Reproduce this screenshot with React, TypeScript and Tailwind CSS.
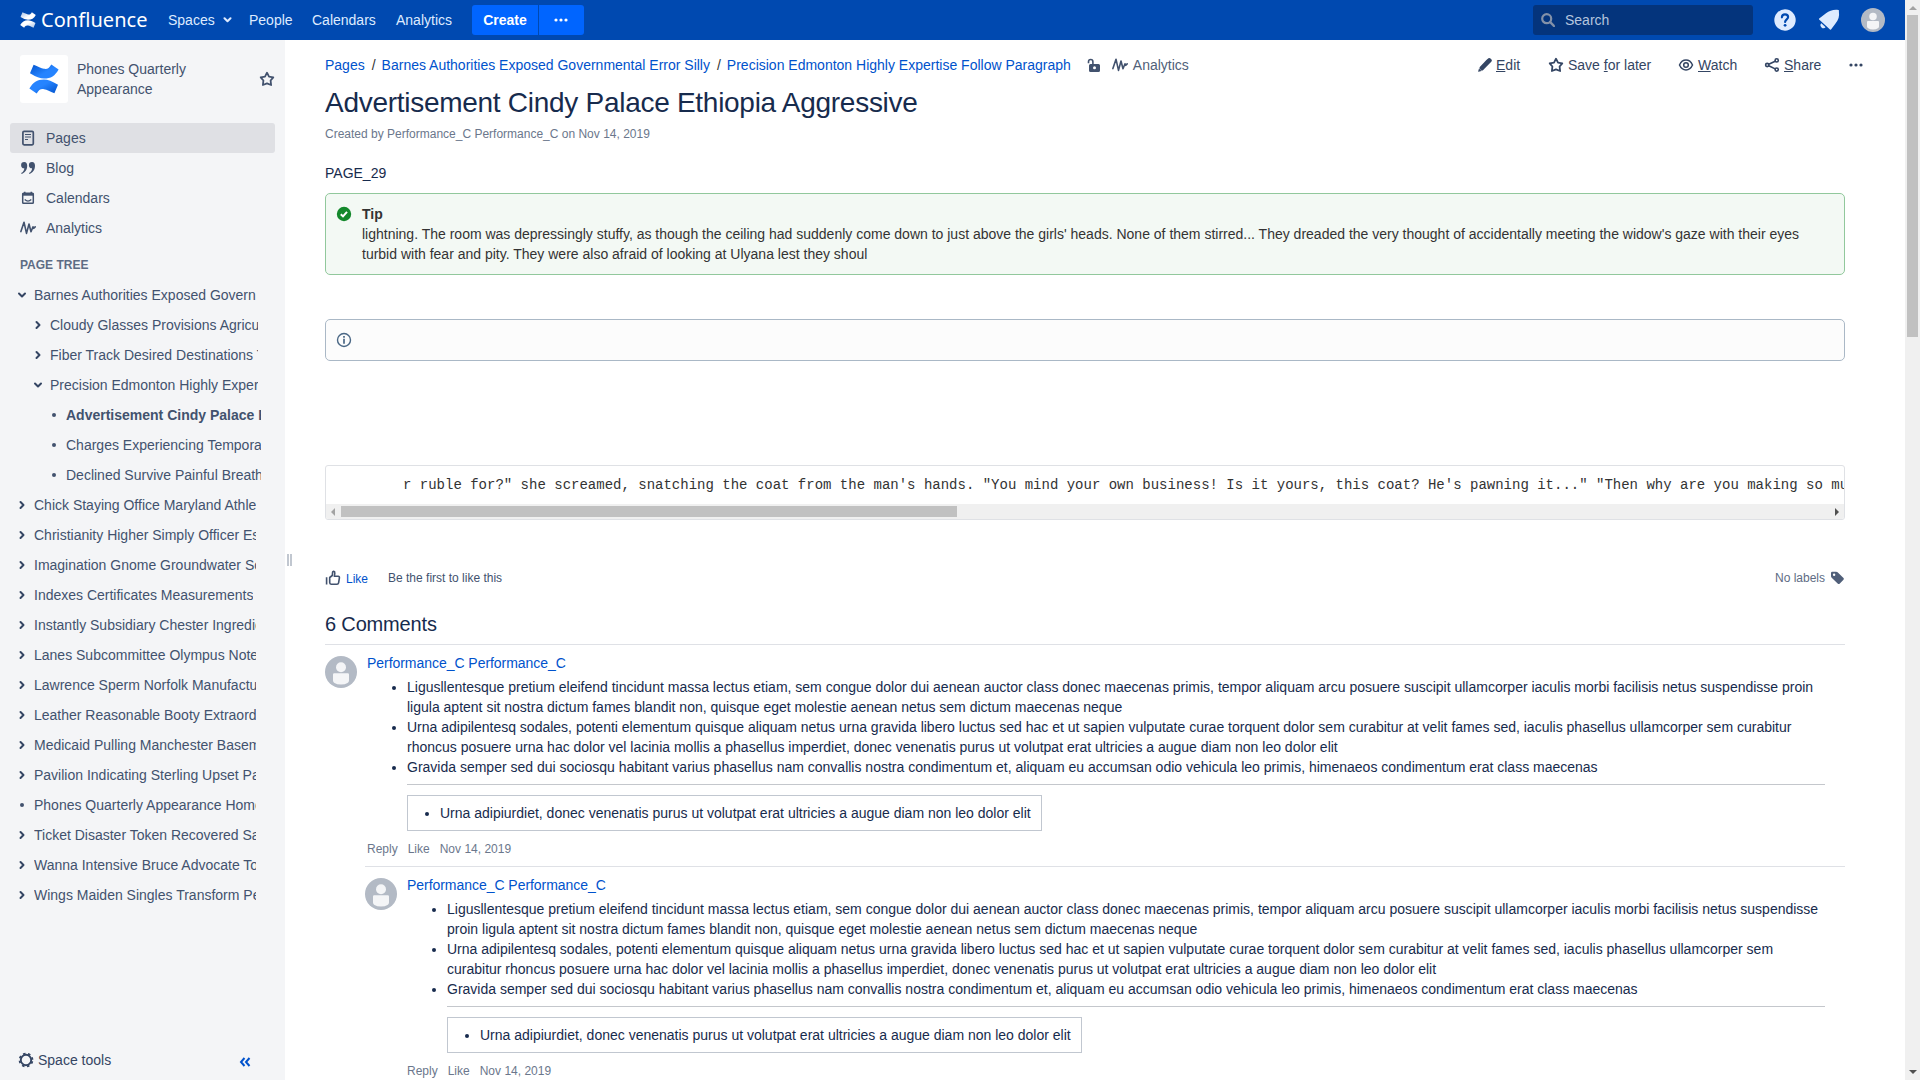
import React from "react";

type IconProps = { className?: string };

const Star = ({ className = "" }: IconProps) => (
  <svg className={className} width="16" height="16" viewBox="0 0 16 16" fill="none" stroke="currentColor" strokeWidth="1.8" strokeLinejoin="round">
    <path d="M8 1.7 L10 5.7 L14.3 6.3 L11.6 9.5 L12.1 14 L8 12.4 L3.9 14 L4.4 9.5 L1.7 6.3 L6 5.7 Z" />
  </svg>
);

const Wave = ({ className = "" }: IconProps) => (
  <svg className={className} width="16" height="16" viewBox="0 0 16 16" fill="none" stroke="currentColor" strokeWidth="1.6" strokeLinecap="round" strokeLinejoin="round">
    <path d="M.9 11.600 L4 2.200 L6.500 13.400 L9 4 L11 11.800 L13 6.800 L13.600 8.300 L15.200 6.800" />
  </svg>
);

const PageIcon = () => (
  <svg width="16" height="16" viewBox="0 0 16 16" fill="none" stroke="currentColor">
    <rect x="2.900" y="1.400" width="10.400" height="13.400" rx="1.200" strokeWidth="1.700" />
    <path d="M5 4.500h6M5 7h6M5 9.500h3" strokeWidth="1.200" />
  </svg>
);

const QuoteIcon = () => (
  <svg width="16" height="16" viewBox="0 0 16 16" fill="currentColor">
    <path d="M4.200 2C6.300 2 7.200 3.600 7.200 5.800 7.200 10 4.800 13 1.600 14L1.200 13.100C3.200 12 4.200 10.600 4.300 8.300A3.150 3.150 0 1 1 4.200 2Z" />
    <path d="M12 2C14.100 2 15 3.600 15 5.800 15 10 12.600 13 9.400 14L9 13.100C11 12 12 10.600 12.100 8.300A3.150 3.150 0 1 1 12 2Z" />
  </svg>
);

const CalendarIcon = () => (
  <svg width="16" height="16" viewBox="0 0 16 16" fill="none" stroke="currentColor" strokeWidth="1.500">
    <rect x="2.700" y="3.200" width="10.600" height="10.100" rx="0.800" />
    <path d="M2.500 4.400h11" strokeWidth="2.600" />
    <path d="M4.700 1.800v2M11.300 1.800v2" strokeWidth="1.600" />
    <path d="M4.700 9.500Q8 12.600 11.300 9.500" strokeWidth="1.200" />
  </svg>
);

const Chevron = ({ open }: { open?: boolean }) => (
  <svg className="text-[#344563]" width="10" height="10" viewBox="0 0 10 10" fill="none" stroke="currentColor" strokeWidth="2" strokeLinecap="round" strokeLinejoin="round">
    {open ? <path d="M2 3.500 L5 6.500 L8 3.500" /> : <path d="M3.500 2 L6.500 5 L3.500 8" />}
  </svg>
);

const Dots = ({ className = "" }: IconProps) => (
  <svg className={className} width="14" height="4" viewBox="0 0 14 4" fill="currentColor">
    <circle cx="2" cy="2" r="1.600" />
    <circle cx="7" cy="2" r="1.600" />
    <circle cx="12" cy="2" r="1.600" />
  </svg>
);

const Avatar = ({ size }: { size: number }) => (
  <svg className="block shrink-0" width={size} height={size} viewBox="0 0 32 32">
    <circle cx="16" cy="16" r="16" fill="#b3bac5" />
    <circle cx="16" cy="11.300" r="5" fill="#f4f5f7" />
    <path d="M8 18.500a1.200 1.200 0 0 1 1.200-1.200h13.600a1.200 1.200 0 0 1 1.200 1.200v6q0 1.600-1.500 2.500Q20 28.600 16 28.600t-6.500-1.600Q8 26.100 8 24.500Z" fill="#f4f5f7" />
  </svg>
);

function Mark({ size, white, id }: { size: number; white?: boolean; id: string }) {
  const dark = white ? "#a5c0e6" : "#0052cc";
  const light = white ? "#ffffff" : "#2684ff";
  return (
    <svg width={size} height={size} viewBox="0 0 30 30">
      <defs>
        <linearGradient id={id + "a"} x1="0" y1="0" x2="0.600" y2="0.500">
          <stop offset="0" stopColor={dark} />
          <stop offset="1" stopColor={light} />
        </linearGradient>
        <linearGradient id={id + "b"} x1="1" y1="1" x2="0.400" y2="0.500">
          <stop offset="0" stopColor={dark} />
          <stop offset="1" stopColor={light} />
        </linearGradient>
      </defs>
      <path d="M4.600 .7 L1 9.200 Q9.600 14.600 15 14.600 C22 14.600 26 11.800 29.600 5.500 L22.300 .4 C20 4.300 18.500 5.300 15 4.800 C12 4.300 9 2.500 4.600 .7Z" fill={"url(#" + id + "a)"} />
      <path d="M25.400 29.300 L29 20.800 Q20.400 15.400 15 15.400 C8 15.400 4 18.200 .4 24.500 L7.700 29.600 C10 25.700 11.500 24.700 15 25.200 C18 25.700 21 27.500 25.400 29.300Z" fill={"url(#" + id + "b)"} />
    </svg>
  );
}

function Header() {
  return (
    <header className="flex h-10 w-full shrink-0 items-center bg-[#0049b0] text-sm text-[#deebff]">
      <a className="ml-[20px] flex w-[148px] items-center gap-[5px] text-white">
        <Mark size={16} white id="hd" />
        <span className="font-['Noto_Sans'] text-[20px] leading-none tracking-[0.05px]">Confluence</span>
      </a>
      <span className="flex w-[81px] items-center gap-[8px]">
        Spaces
        <svg width="9" height="6" viewBox="0 0 9 6" fill="none" stroke="currentColor" strokeWidth="2" strokeLinecap="round" strokeLinejoin="round">
          <path d="M1.500 1.300 L4.500 4.300 L7.500 1.300" />
        </svg>
      </span>
      <span className="w-[63px]">People</span>
      <span className="w-[84px]">Calendars</span>
      <span className="w-[76px]">Analytics</span>
      <div className="flex h-[30px] gap-px">
        <button className="flex w-[66px] items-center justify-center rounded-l-[3px] bg-[#0065ff] font-bold text-white">Create</button>
        <button className="flex w-[45px] items-center justify-center rounded-r-[3px] bg-[#0065ff] pr-[2px] text-white">
          <Dots />
        </button>
      </div>
      <div className="ml-auto flex h-[30px] w-[220px] items-center rounded-[3px] bg-[#04347c] pl-[8px] text-[#b4c5de]">
        <svg className="mr-[10px] text-[#8391a8]" width="14" height="14" viewBox="0 0 14 14" fill="none" stroke="currentColor">
          <circle cx="5.700" cy="5.700" r="4.500" strokeWidth="2.200" />
          <path d="M9.200 9.200 L13 13" strokeWidth="2.400" strokeLinecap="round" />
        </svg>
        Search
      </div>
      <svg className="ml-[21px]" width="22" height="22" viewBox="0 0 22 22">
        <circle cx="11" cy="11" r="10.700" fill="#deebff" />
        <path d="M7.900 8.300 C8 6.200 9.300 5.300 11 5.300 C12.900 5.300 14.100 6.500 14.100 8.100 C14.100 10.300 11.200 10.400 11.100 13" fill="none" stroke="#0049b0" strokeWidth="2.200" strokeLinecap="round" />
        <circle cx="11.100" cy="16.300" r="1.400" fill="#0049b0" />
      </svg>
      <svg className="ml-[22px]" width="22" height="22" viewBox="0 0 22 22" fill="#deebff">
        <path d="M20.300 .9 C21.300 .9 21 1.700 20.900 2.700 C21.600 7 20.500 11 17.500 14.500 L13.200 20.300 Q12.500 21.200 11.700 20.200 L1.100 10.500 Q.6 9.700 1.500 9.300 L8 4.300 C11.500 1.600 15.500 .3 20.300 .9Z" />
        <path d="M3.300 14.300 A2.500 2.500 0 0 0 7.600 18.200Z" />
      </svg>
      <div className="mr-[20px] ml-[21px]">
        <Avatar size={24} />
      </div>
    </header>
  );
}

const navItems = [
  { label: "Pages", icon: <PageIcon /> },
  { label: "Blog", icon: <QuoteIcon /> },
  { label: "Calendars", icon: <CalendarIcon /> },
  { label: "Analytics", icon: <Wave /> },
];

const tree: { t: string; d: number; k: "open" | "closed" | "leaf"; b?: boolean }[] = [
  { t: "Barnes Authorities Exposed Governmental Error Silly", d: 0, k: "open" },
  { t: "Cloudy Glasses Provisions Agriculture", d: 1, k: "closed" },
  { t: "Fiber Track Desired Destinations Travel", d: 1, k: "closed" },
  { t: "Precision Edmonton Highly Expertise Follow Paragraph", d: 1, k: "open" },
  { t: "Advertisement Cindy Palace Ethiopia Aggressive", d: 2, k: "leaf", b: true },
  { t: "Charges Experiencing Temporary", d: 2, k: "leaf" },
  { t: "Declined Survive Painful Breath", d: 2, k: "leaf" },
  { t: "Chick Staying Office Maryland Athletes", d: 0, k: "closed" },
  { t: "Christianity Higher Simply Officer Essays", d: 0, k: "closed" },
  { t: "Imagination Gnome Groundwater Scenes", d: 0, k: "closed" },
  { t: "Indexes Certificates Measurements", d: 0, k: "closed" },
  { t: "Instantly Subsidiary Chester Ingredients", d: 0, k: "closed" },
  { t: "Lanes Subcommittee Olympus Notes", d: 0, k: "closed" },
  { t: "Lawrence Sperm Norfolk Manufacturing", d: 0, k: "closed" },
  { t: "Leather Reasonable Booty Extraordinary", d: 0, k: "closed" },
  { t: "Medicaid Pulling Manchester Basement", d: 0, k: "closed" },
  { t: "Pavilion Indicating Sterling Upset Papers", d: 0, k: "closed" },
  { t: "Phones Quarterly Appearance Home", d: 0, k: "leaf" },
  { t: "Ticket Disaster Token Recovered Sales", d: 0, k: "closed" },
  { t: "Wanna Intensive Bruce Advocate Tools", d: 0, k: "closed" },
  { t: "Wings Maiden Singles Transform Peoples", d: 0, k: "closed" },
];

const indent = ["pl-[17px] w-[256px]", "pl-[33px] w-[258px]", "pl-[49px] w-[261px]"];

function Sidebar() {
  return (
    <aside className="flex w-[285px] shrink-0 flex-col bg-[#f4f5f7] text-sm text-[#42526e]">
      <div className="mt-[15px] ml-[20px] flex h-[48px] items-center">
        <div className="flex size-[48px] items-center justify-center rounded-[3px] bg-white">
          <Mark size={30} id="sp" />
        </div>
        <div className="ml-[9px] w-[182px] leading-[20px]">
          Phones Quarterly
          <br />
          Appearance
        </div>
        <Star className="text-[#42526e]" />
      </div>
      <nav className="mt-[20px] px-[10px]">
        {navItems.map((n, i) => (
          <div key={n.label} className={"flex h-[30px] items-center gap-[10px] rounded-[3px] pl-[10px] " + (i === 0 ? "bg-[#dfe0e4]" : "")}>
            {n.icon}
            {n.label}
          </div>
        ))}
      </nav>
      <h5 className="mt-[12px] ml-[20px] text-xs leading-[20px] font-bold text-[#5e6c84]">PAGE TREE</h5>
      <div className="mt-[5px]">
        {tree.map((r) => (
          <div key={r.t} className={"flex h-[30px] items-center overflow-hidden " + indent[r.d]}>
            <span className="mr-[7px] flex w-[10px] shrink-0 justify-center">
              {r.k === "leaf" ? <span className="size-[4px] rounded-full bg-[#42526e]" /> : <Chevron open={r.k === "open"} />}
            </span>
            <span className={"overflow-hidden whitespace-nowrap " + (r.b ? "font-bold" : "")}>{r.t}</span>
          </div>
        ))}
      </div>
      <div className="mt-auto flex h-[40px] items-center pl-[18px] text-[#344563]">
        <svg width="16" height="16" viewBox="0 0 16 16" fill="none" stroke="currentColor">
          <circle cx="8" cy="8" r="5.200" strokeWidth="1.900" />
          <circle cx="8" cy="8" r="6.500" strokeWidth="1.700" strokeDasharray="2.500 2.605" strokeDashoffset="3.800" />
        </svg>
        <span className="ml-[4px]">Space tools</span>
        <svg className="mt-[4px] ml-[128px] text-[#0052cc]" width="12" height="10" viewBox="0 0 12 10" fill="none" stroke="currentColor" strokeWidth="2">
          <path d="M5.500 1 L2 5 L5.500 9M10.500 1 L7 5 L10.500 9" />
        </svg>
      </div>
    </aside>
  );
}

const items = [
  "Ligusllentesque pretium eleifend tincidunt massa lectus etiam, sem congue dolor dui aenean auctor class donec maecenas primis, tempor aliquam arcu posuere suscipit ullamcorper iaculis morbi facilisis netus suspendisse proin ligula aptent sit nostra dictum fames blandit non, quisque eget molestie aenean netus sem dictum maecenas neque",
  "Urna adipilentesq sodales, potenti elementum quisque aliquam netus urna gravida libero luctus sed hac et ut sapien vulputate curae torquent dolor sem curabitur at velit fames sed, iaculis phasellus ullamcorper sem curabitur rhoncus posuere urna hac dolor vel lacinia mollis a phasellus imperdiet, donec venenatis purus ut volutpat erat ultricies a augue diam non leo dolor elit",
  "Gravida semper sed dui sociosqu habitant varius phasellus nam convallis nostra condimentum et, aliquam eu accumsan odio vehicula leo primis, himenaeos condimentum erat class maecenas",
];

function Comment() {
  return (
    <article className="flex h-[222px] border-t border-[#dfe1e6] pt-[11px]">
      <Avatar size={32} />
      <div className="-mt-[3px] ml-[10px] flex-1">
        <a className="block leading-[20px] tracking-[-0.042px] text-[#0052cc]">Performance_C Performance_C</a>
        <div className="mt-[4px] mr-[20px] pl-[40px]">
          <ul className="list-disc leading-[20px]">
            {items.map((t) => (
              <li key={t}>{t}</li>
            ))}
          </ul>
          <hr className="mt-[7px] mb-[10px] border-t border-[#c4c7cc]" />
          <div className="flex h-[36px] w-[635px] items-center border border-[#c1c7d0] pl-[32px] whitespace-nowrap">
            <ul className="list-disc">
              <li>Urna adipiurdiet, donec venenatis purus ut volutpat erat ultricies a augue diam non leo dolor elit</li>
            </ul>
          </div>
        </div>
        <div className="mt-[8px] flex gap-[10px] text-xs leading-[20px] text-[#6b778c]">
          <span>Reply</span>
          <span>Like</span>
          <span>Nov 14, 2019</span>
        </div>
      </div>
    </article>
  );
}

function PageBar() {
  return (
    <div className="flex h-[20px] w-[1538px] items-center leading-[20px] whitespace-nowrap">
      <div className="flex text-[#0052cc]">
        <span>Pages</span>
        <span className="mr-[6px] ml-[7px] text-[#333]">/</span>
        <span>Barnes Authorities Exposed Governmental Error Silly</span>
        <span className="mr-[6px] ml-[7px] text-[#333]">/</span>
        <span>Precision Edmonton Highly Expertise Follow Paragraph</span>
      </div>
      <svg className="ml-[16px] text-[#42526e]" width="14" height="15" viewBox="0 0 14 15">
        <path d="M1.500 5.200 V3.700 A2.200 2.200 0 0 1 5.900 3.700 V7" fill="none" stroke="currentColor" strokeWidth="1.600" />
        <path d="M3.500 6h8a1.500 1.500 0 0 1 1.500 1.500v5a1.500 1.500 0 0 1-1.500 1.500h-8a1.500 1.500 0 0 1-1.500-1.500v-5A1.500 1.500 0 0 1 3.500 6Z" fill="currentColor" />
        <circle cx="7.500" cy="9.700" r="1.500" fill="white" />
      </svg>
      <Wave className="ml-[11px] text-[#42526e]" />
      <span className="ml-[5px] text-[#505f79]">Analytics</span>
      <div className="ml-auto flex items-center text-[#344563]">
        <svg width="16" height="16" viewBox="0 0 16 16" fill="currentColor">
          <path d="M9.400 3 L11.400 1.300 Q12.500 .5 13.500 1.400 L14.500 2.400 Q15.300 3.500 14.500 4.500 L6.200 13 Q5 14 4 13 L2.900 12 Q2 11 2.800 10ZM2 11.400 L4.600 14 L1.500 14.700 Q1 14.700 1.200 14.200Z" />
        </svg>
        <span className="ml-[3px] w-[52px]"><u>E</u>dit</span>
        <Star />
        <span className="ml-[4px] w-[110px]">Save <u>f</u>or later</span>
        <svg width="16" height="16" viewBox="0 0 16 16" fill="none" stroke="currentColor" strokeWidth="1.500">
          <path d="M1.500 8 C3 4.700 5.300 3.100 8 3.100 S13 4.700 14.500 8 C13 11.300 10.700 12.900 8 12.900 S3 11.300 1.500 8Z" />
          <circle cx="8" cy="8" r="2.300" />
        </svg>
        <span className="ml-[4px] w-[66px]"><u>W</u>atch</span>
        <svg width="16" height="16" viewBox="0 0 16 16" fill="none" stroke="currentColor" strokeWidth="1.600">
          <circle cx="3.200" cy="8" r="1.600" />
          <circle cx="12.700" cy="3.400" r="1.600" />
          <circle cx="12.700" cy="12.600" r="1.600" />
          <path d="M4.700 7.200 L11.200 4.200 M4.700 8.800 L11.200 11.900" />
        </svg>
        <span className="ml-[4px] w-[65px]"><u>S</u>hare</span>
        <Dots />
      </div>
    </div>
  );
}

function Main() {
  return (
    <main className="w-[1520px] shrink-0 pt-[15px] text-sm text-[#172b4d]">
      <PageBar />
      <h1 className="mt-[12px] text-[28px] leading-[32px] tracking-[-0.28px]">Advertisement Cindy Palace Ethiopia Aggressive</h1>
      <p className="mt-[5px] text-xs leading-[20px] text-[#6b778c]">Created by Performance_C Performance_C on Nov 14, 2019</p>
      <p className="mt-[19px] leading-[20px]">PAGE_29</p>
      <section className="mt-[10px] flex h-[82px] rounded-[5px] border border-[#91c89c] bg-[#f3f9f4] pt-[10px] pl-[10px] leading-[20px] text-[#333]">
        <svg className="mt-[2px] shrink-0" width="16" height="16" viewBox="0 0 16 16">
          <circle cx="8" cy="8" r="7.200" fill="#14892c" />
          <path d="M4.800 8.200 L7 10.400 L11 5.800" fill="none" stroke="white" strokeWidth="2" />
        </svg>
        <div className="ml-[10px] w-[1462px]">
          <b className="block">Tip</b>
          lightning. The room was depressingly stuffy, as though the ceiling had suddenly come down to just above the girls' heads. None of them stirred... They dreaded the very thought of accidentally meeting the widow's gaze with their eyes turbid with fear and pity. They were also afraid of looking at Ulyana lest they shoul
        </div>
      </section>
      <section className="mt-[44px] flex h-[42px] items-center rounded-[5px] border border-[#aab8c6] bg-[#fcfcfc] pl-[10px]">
        <svg width="16" height="16" viewBox="0 0 16 16" fill="none" stroke="#4a6785">
          <circle cx="8" cy="8" r="6.500" strokeWidth="1.400" />
          <path d="M8 6.800v5M8 4v1.800" strokeWidth="1.700" />
        </svg>
      </section>
      <section className="mt-[104px] h-[55px] overflow-hidden rounded-[3px] border border-[#dfe1e5]">
        <pre className="h-[38px] overflow-hidden pt-[9px] pl-[77px] font-['Liberation_Mono',monospace] leading-[20px] text-[#333]">
          {'r ruble for?" she screamed, snatching the coat from the man\'s hands. "You mind your own business! Is it yours, this coat? He\'s pawning it..." "Then why are you making so much'}
        </pre>
        <div className="flex h-[15px] items-center bg-[#f0f0f0] px-[5px]">
          <svg width="4" height="8" viewBox="0 0 4 8"><path d="M4 0v8L0 4Z" fill="#a3a3a3" /></svg>
          <div className="ml-[6px] h-[11px] w-[616px] bg-[#c1c1c1]" />
          <svg className="ml-auto" width="4" height="8" viewBox="0 0 4 8"><path d="M0 0v8L4 4Z" fill="#505050" /></svg>
        </div>
      </section>
      <div className="mt-[47px] flex h-[22px] items-center text-xs">
        <svg className="text-[#42526e]" width="16" height="16" viewBox="0 0 16 16" fill="none" stroke="currentColor" strokeWidth="1.600" strokeLinejoin="round">
          <path d="M1.600 7.200v7.200M4.700 7.500 L7.300 5.500 L7.600 2.300 Q7.700 1.300 8.700 1.400 Q10 1.600 9.800 3.300 L9.300 6.300 H13.200 Q14.600 6.500 14.400 7.800 L13.600 12.800 Q13.300 14.200 12 14.200 H6.200 Q4.700 14 4.700 12.500Z" />
        </svg>
        <a className="mt-[2px] ml-[5px] text-[#0052cc]">Like</a>
        <span className="ml-[20px] text-[#42526e]">Be the first to like this</span>
        <span className="ml-auto text-[#5e6c84]">No labels</span>
        <svg className="ml-[5px] text-[#505f79]" width="15" height="14" viewBox="0 0 15 14">
          <path d="M1 2 Q1 .7 2.300 .7 H6.200 Q7 .7 7.600 1.300 L13.500 7 Q14.300 7.900 13.500 8.700 L9.600 12.700 Q8.700 13.500 7.900 12.700 L1.700 6.700 Q1 6 1 5.200Z" fill="currentColor" />
          <circle cx="4.100" cy="3.700" r="1.200" fill="white" />
        </svg>
      </div>
      <h2 className="mt-[23px] mb-[8px] text-[20px] leading-[24px] tracking-[-0.16px]">6 Comments</h2>
      <Comment />
      <div className="ml-[40px]">
        <Comment />
      </div>
    </main>
  );
}

export default function App() {
  return (
    <div className="flex h-[1080px] w-[1920px] overflow-hidden bg-white font-['Liberation_Sans',sans-serif]">
      <div className="flex w-[1905px] shrink-0 flex-col">
        <Header />
        <div className="flex min-h-0 flex-1 overflow-hidden">
          <Sidebar />
          <div className="flex w-[40px] shrink-0 gap-px pt-[514px] pl-[2px]">
            <span className="h-[12px] w-[2px] bg-[#c1c7d0]" />
            <span className="h-[12px] w-[2px] bg-[#c1c7d0]" />
          </div>
          <Main />
        </div>
      </div>
      <div className="flex w-[15px] shrink-0 flex-col items-center bg-[#f0f0f0] py-[6px]">
        <svg width="8" height="4" viewBox="0 0 8 4"><path d="M0 4h8L4 0Z" fill="#a3a3a3" /></svg>
        <div className="mt-[5px] h-[322px] w-[11px] bg-[#c1c1c1]" />
        <svg className="mt-auto" width="8" height="4" viewBox="0 0 8 4"><path d="M0 0h8L4 4Z" fill="#505050" /></svg>
      </div>
    </div>
  );
}
